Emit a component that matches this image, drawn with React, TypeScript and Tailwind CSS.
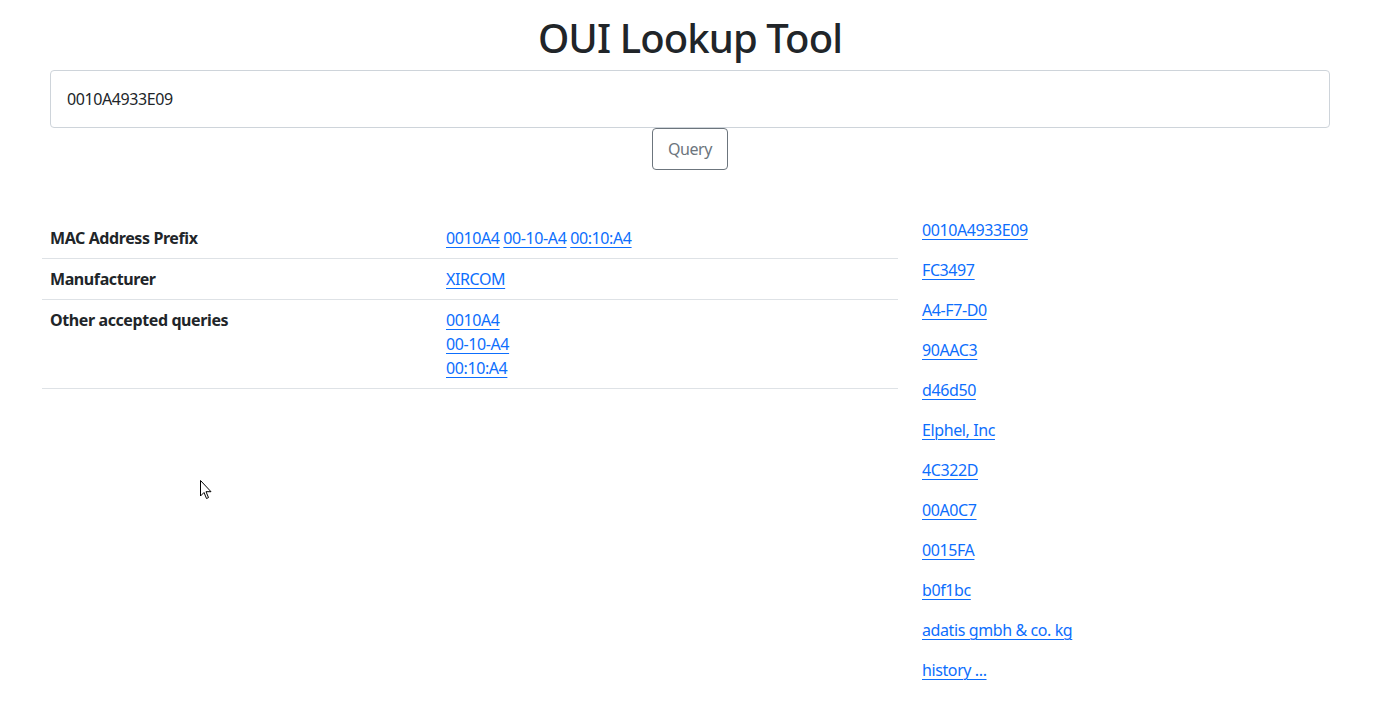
import React from "react";

const history = [
  "0010A4933E09",
  "FC3497",
  "A4-F7-D0",
  "90AAC3",
  "d46d50",
  "Elphel, Inc",
  "4C322D",
  "00A0C7",
  "0015FA",
  "b0f1bc",
  "adatis gmbh & co. kg",
  "history ...",
];

const linkCls = "text-[#0d6efd] underline underline-offset-[3px] decoration-1";

export default function App() {
  return (
    <div
      className="relative min-h-[720px] bg-white text-[#212529] text-[16px] leading-6 tracking-[-0.4px]"
      style={{ fontFamily: '"Segoe UI", "Noto Sans", "Open Sans", sans-serif' }}
    >
      <div className="w-[1322px] mx-auto px-3 pt-[14px]">
        <h1 className="text-center text-[40px] leading-[48px] font-medium mb-2 tracking-[-0.9px] pr-[2px]">OUI Lookup Tool</h1>
        <div className="pl-2 pr-[10px]">
          <div className="h-[58px] border border-[#ced4da] rounded-[4px] flex items-center px-4">
            <span>0010A4933E09</span>
          </div>
        </div>
        <div className="flex justify-center pr-[2px]">
          <button className="w-[76px] h-[42px] border border-[#6c757d] rounded-[4px] text-[#6c757d] bg-white">
            Query
          </button>
        </div>
        <div className="flex -mx-3 mt-[48px]">
          <div className="w-[880px] px-3">
            <table className="w-full border-collapse">
              <tbody>
                <tr className="border-b border-[#dee2e6]">
                  <td className="w-[396px] p-2 font-bold align-top">MAC Address Prefix</td>
                  <td className="p-2 align-top">
                    <a className={linkCls}>0010A4</a> <a className={linkCls}>00-10-A4</a>{" "}
                    <a className={linkCls}>00:10:A4</a>
                  </td>
                </tr>
                <tr className="border-b border-[#dee2e6]">
                  <td className="p-2 font-bold align-top">Manufacturer</td>
                  <td className="p-2 align-top">
                    <a className={linkCls}>XIRCOM</a>
                  </td>
                </tr>
                <tr className="border-b border-[#dee2e6]">
                  <td className="p-2 font-bold align-top">Other accepted queries</td>
                  <td className="p-2 align-top">
                    <div>
                      <a className={linkCls}>0010A4</a>
                    </div>
                    <div>
                      <a className={linkCls}>00-10-A4</a>
                    </div>
                    <div>
                      <a className={linkCls}>00:10:A4</a>
                    </div>
                  </td>
                </tr>
              </tbody>
            </table>
          </div>
          <div className="w-[440px] px-3 flex flex-col gap-4">
            {history.map((h) => (
              <div key={h}>
                <a className={linkCls}>{h}</a>
              </div>
            ))}
          </div>
        </div>
      </div>
      <svg className="absolute left-[200px] top-[480px]" width="12" height="20" viewBox="0 0 12 20">
        <path d="M0.5 0.5 L0.5 16 L4 12.5 L6.5 18.5 L8.5 17.6 L6 11.7 L11 11.7 Z" fill="white" stroke="black" strokeWidth="1" />
      </svg>
    </div>
  );
}
